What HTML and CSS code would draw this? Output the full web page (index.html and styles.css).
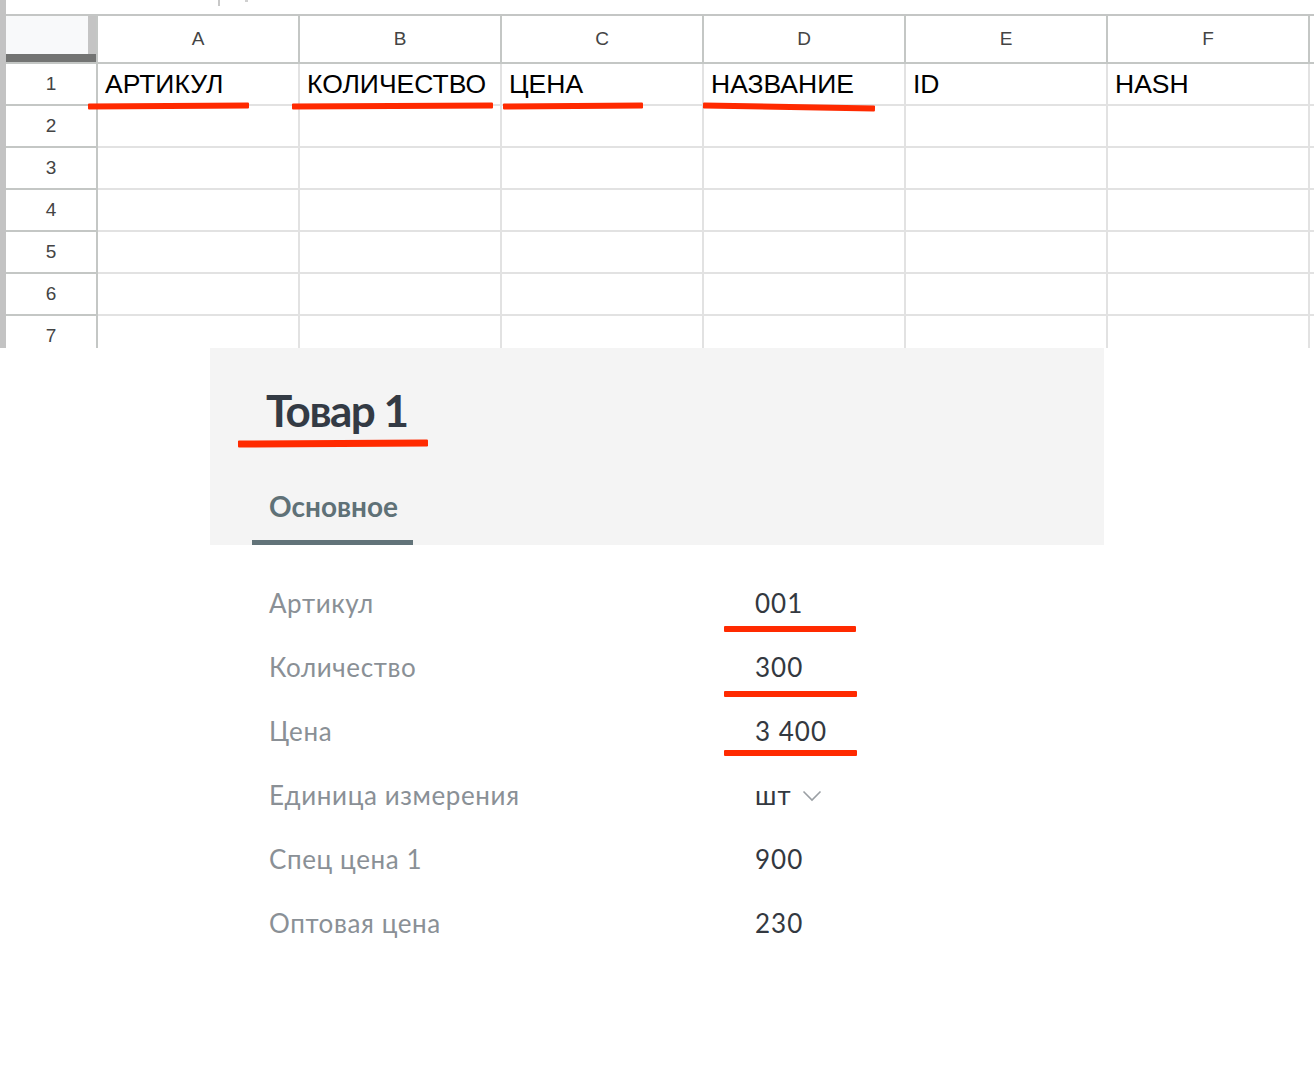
FILE: index.html
```html
<!DOCTYPE html>
<html lang="ru">
<head>
    <meta charset="UTF-8">
    <title>Товар 1</title>
    <link rel="stylesheet" href="styles.css">
</head>
<body>
<div class="page">

    <!-- Spreadsheet with the import columns -->
    <div class="sheet">
        <div class="sheet-top">
            <span class="tick"></span>
            <span class="dot"></span>
        </div>
        <div class="grid">
            <div class="corner"></div>
            <div class="col-head">A</div>
            <div class="col-head">B</div>
            <div class="col-head">C</div>
            <div class="col-head">D</div>
            <div class="col-head">E</div>
            <div class="col-head">F</div>
            <div class="col-head filler"></div>

            <div class="row-head">1</div>
            <div class="cell">АРТИКУЛ</div>
            <div class="cell">КОЛИЧЕСТВО</div>
            <div class="cell">ЦЕНА</div>
            <div class="cell">НАЗВАНИЕ</div>
            <div class="cell">ID</div>
            <div class="cell">HASH</div>
            <div class="cell filler"></div>

            <div class="row-head">2</div>
            <div class="cell"></div><div class="cell"></div><div class="cell"></div>
            <div class="cell"></div><div class="cell"></div><div class="cell"></div>
            <div class="cell filler"></div>

            <div class="row-head">3</div>
            <div class="cell"></div><div class="cell"></div><div class="cell"></div>
            <div class="cell"></div><div class="cell"></div><div class="cell"></div>
            <div class="cell filler"></div>

            <div class="row-head">4</div>
            <div class="cell"></div><div class="cell"></div><div class="cell"></div>
            <div class="cell"></div><div class="cell"></div><div class="cell"></div>
            <div class="cell filler"></div>

            <div class="row-head">5</div>
            <div class="cell"></div><div class="cell"></div><div class="cell"></div>
            <div class="cell"></div><div class="cell"></div><div class="cell"></div>
            <div class="cell filler"></div>

            <div class="row-head">6</div>
            <div class="cell"></div><div class="cell"></div><div class="cell"></div>
            <div class="cell"></div><div class="cell"></div><div class="cell"></div>
            <div class="cell filler"></div>

            <div class="row-head">7</div>
            <div class="cell"></div><div class="cell"></div><div class="cell"></div>
            <div class="cell"></div><div class="cell"></div><div class="cell"></div>
            <div class="cell filler"></div>
        </div>
    </div>

    <!-- Product card -->
    <div class="card">
        <div class="card-head">
            <h1 class="title">Товар 1</h1>
            <div class="tabs">
                <span class="tab active">Основное</span>
            </div>
        </div>
        <div class="fields">
            <div class="label">Артикул</div>
            <div class="value">001</div>

            <div class="label">Количество</div>
            <div class="value">300</div>

            <div class="label">Цена</div>
            <div class="value">3 400</div>

            <div class="label">Единица измерения</div>
            <div class="value">шт
                <svg class="chevron" width="20" height="12" viewBox="0 0 20 12">
                    <polyline points="1.5,1.5 10,10 18.5,1.5" fill="none" stroke="#9a9fa4" stroke-width="1.6"/>
                </svg>
            </div>

            <div class="label">Спец цена 1</div>
            <div class="value">900</div>

            <div class="label">Оптовая цена</div>
            <div class="value">230</div>
        </div>
    </div>

    <!-- hand-drawn highlight strokes -->
    <span class="mark m1"></span>
    <span class="mark m2"></span>
    <span class="mark m3"></span>
    <span class="mark m4"></span>
    <span class="mark m5"></span>
    <span class="mark m6"></span>
    <span class="mark m7"></span>
    <span class="mark m8"></span>

</div>
</body>
</html>
```

FILE: styles.css
```css
* {
    box-sizing: border-box;
}

body {
    margin: 0;
    background-color: #fff;
    font-family: 'Lato', 'Noto Sans', sans-serif;
}

.page {
    position: relative;
    width: 1314px;
    height: 1072px;
    overflow: hidden;
}

/* ---------- spreadsheet ---------- */

.sheet {
    height: 348px;
    overflow: hidden;
    border-left: 6px solid #c3c3c3;
    font-family: 'Liberation Sans', Arial, sans-serif;
}

.sheet-top {
    display: flex;
    align-items: flex-start;
    height: 16px;
    border-bottom: 2px solid #c4c6c5;
}

.tick {
    width: 2px;
    height: 6px;
    margin-left: 212px;
    background-color: #c8c8c8;
}

.dot {
    width: 3px;
    height: 2px;
    margin-left: 25px;
    background-color: #d0d0d0;
}

.grid {
    display: grid;
    grid-template-columns: 92px repeat(6, 202px) 1fr;
    grid-template-rows: 48px repeat(7, 42px);
}

.corner {
    border-right: 2px solid #c4c7c5;
    border-bottom: 2px solid #c4c7c5;
    background:
        linear-gradient(#737473, #737473) left bottom / 100% 8px no-repeat,
        linear-gradient(#c4c4c4, #c4c4c4) right top / 8px 100% no-repeat,
        #f8f9fa;
}

.col-head {
    display: flex;
    align-items: center;
    justify-content: center;
    border-right: 2px solid #c4c7c5;
    border-bottom: 2px solid #c4c7c5;
    color: #444;
    font-size: 19px;
}

.row-head {
    display: flex;
    align-items: center;
    justify-content: center;
    border-right: 2px solid #c4c7c5;
    border-bottom: 2px solid #c4c7c5;
    color: #444;
    font-size: 19px;
}

.cell {
    display: flex;
    align-items: center;
    padding-left: 7px;
    border-right: 2px solid #e2e2e2;
    border-bottom: 2px solid #e2e2e2;
    color: #000;
    font-size: 26.5px;
    white-space: nowrap;
    overflow: hidden;
}

.filler {
    border-right: none;
}

/* ---------- product card ---------- */

.card {
    width: 894px;
    margin-left: 210px;
}

.card-head {
    height: 197px;
    padding: 38px 42px 0;
    background-color: #f4f4f4;
}

.title {
    margin: 0 0 0 14px;
    font-size: 44px;
    line-height: 48px;
    font-weight: 700;
    letter-spacing: -1.5px;
    color: #333a44;
}

.tabs {
    display: flex;
    margin-top: 55px;
}

.tab {
    padding: 0 15px 17px 17px;
    font-size: 28px;
    line-height: 34px;
    font-weight: 700;
    color: #5f7177;
}

.tab.active {
    border-bottom: 5px solid #627379;
}

.fields {
    display: grid;
    grid-template-columns: 486px 1fr;
    grid-auto-rows: 64px;
    margin-top: 26px;
    padding-left: 59px;
    font-size: 26px;
    line-height: 64px;
    letter-spacing: 0.6px;
}

.label {
    color: #8a9096;
}

.value {
    display: flex;
    align-items: center;
    color: #333840;
    letter-spacing: 1px;
}

.chevron {
    margin-left: 10px;
    margin-top: 2px;
}

/* ---------- highlight strokes ---------- */

.mark {
    position: absolute;
    height: 6px;
    background-color: #ff2a00;
    border-radius: 1px;
}

.m1 { left: 88px;  top: 103px; width: 161px; transform: rotate(-0.3deg); }
.m2 { left: 292px; top: 103px; width: 201px; transform: rotate(-0.3deg); }
.m3 { left: 503px; top: 103px; width: 140px; transform: rotate(-0.4deg); }
.m4 { left: 703px; top: 104px; width: 172px; transform: rotate(1deg); }
.m5 { left: 238px; top: 440px; width: 190px; height: 7px; transform: rotate(-0.3deg); }
.m6 { left: 724px; top: 626px; width: 132px; }
.m7 { left: 724px; top: 691px; width: 133px; }
.m8 { left: 724px; top: 750px; width: 133px; }
```
